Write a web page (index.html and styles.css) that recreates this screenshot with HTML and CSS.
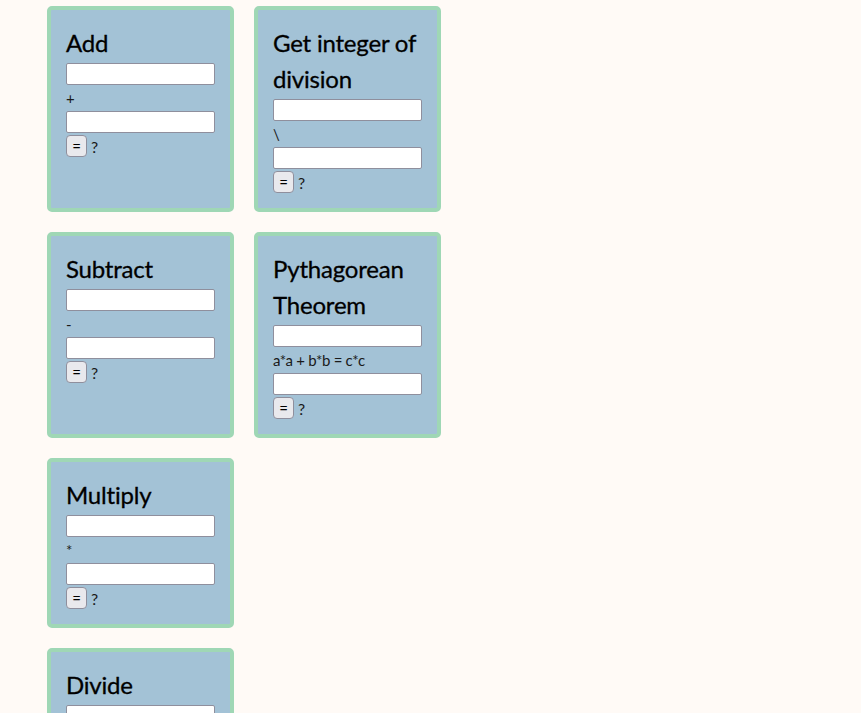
FILE: index.html
```html
<!DOCTYPE html>
<html>
<head>
<meta charset="utf-8">
<link rel="stylesheet" href="styles.css">
</head>
<body>
<div class="board">
  <div class="row">
    <div class="card">
      <h2 class="title">Add</h2>
      <input class="field" type="text">
      <div class="op">+</div>
      <input class="field" type="text">
      <div class="result"><button class="eq">=</button> <span class="q">?</span></div>
    </div>
    <div class="card">
      <h2 class="title">Get integer of division</h2>
      <input class="field" type="text">
      <div class="op">\</div>
      <input class="field" type="text">
      <div class="result"><button class="eq">=</button> <span class="q">?</span></div>
    </div>
  </div>
  <div class="row">
    <div class="card">
      <h2 class="title">Subtract</h2>
      <input class="field" type="text">
      <div class="op">-</div>
      <input class="field" type="text">
      <div class="result"><button class="eq">=</button> <span class="q">?</span></div>
    </div>
    <div class="card">
      <h2 class="title">Pythagorean Theorem</h2>
      <input class="field" type="text">
      <div class="op">a*a + b*b = c*c</div>
      <input class="field" type="text">
      <div class="result"><button class="eq">=</button> <span class="q">?</span></div>
    </div>
  </div>
  <div class="row">
    <div class="card">
      <h2 class="title">Multiply</h2>
      <input class="field" type="text">
      <div class="op">*</div>
      <input class="field" type="text">
      <div class="result"><button class="eq">=</button> <span class="q">?</span></div>
    </div>
  </div>
  <div class="row">
    <div class="card">
      <h2 class="title">Divide</h2>
      <input class="field" type="text">
      <div class="op">/</div>
      <input class="field" type="text">
      <div class="result"><button class="eq">=</button> <span class="q">?</span></div>
    </div>
  </div>
</div>
</body>
</html>
```
FILE: styles.css
```css
html, body {
  margin: 0;
  padding: 0;
  background: #fffaf6;
  font-family: Lato, "Noto Sans", sans-serif;
  color: #111;
}
.board {
  display: flex;
  flex-direction: column;
  gap: 20px;
  padding: 6px 0 0 47px;
}
.row {
  display: flex;
  gap: 20px;
  align-items: stretch;
}
.card {
  box-sizing: border-box;
  width: 187px;
  padding: 15px;
  background: #a3c2d6;
  border: 4px solid #9fd7b5;
  border-radius: 5px;
}
.title {
  margin: 0 0 2px 0;
  font-size: 24px;
  line-height: 36px;
  font-weight: 400;
  letter-spacing: -0.2px;
  color: #000;
  -webkit-text-stroke: 0.3px #000;
}
.field {
  display: block;
  box-sizing: border-box;
  width: 149px;
  height: 22px;
  margin: 0;
  padding: 0 4px;
  background: #fff;
  border: 1px solid #8f8f9d;
  border-radius: 2px;
}
.op {
  height: 26px;
  font-size: 15px;
  line-height: 27px;
  color: #1a1a1a;
  letter-spacing: -0.3px;
}
.result {
  display: flex;
  align-items: center;
  gap: 4px;
  margin-top: 2px;
  height: 22px;
  font-size: 16px;
}
.eq {
  box-sizing: border-box;
  width: 21px;
  height: 22px;
  padding: 0 0 1px 0;
  font-family: inherit;
  font-size: 15px;
  color: #000;
  background: #e9e9ed;
  border: 1px solid #8f8f9d;
  border-radius: 4px;
}
.q {
  color: #1a1a1a;
}
```
